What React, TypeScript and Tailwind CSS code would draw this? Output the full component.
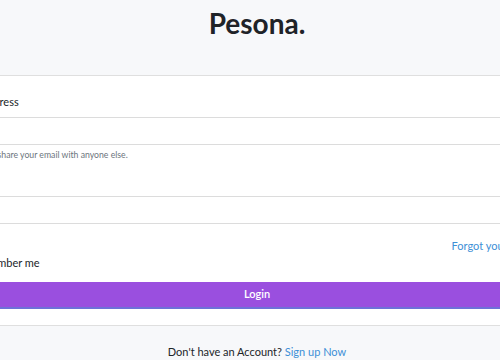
import React from "react";

export default function App() {
  return (
    <div
      className="w-[500px] h-[360px] overflow-hidden bg-white flex justify-center items-start"
      style={{ fontFamily: "Lato, 'Noto Sans', sans-serif" }}
    >
      <div className="shrink-0 w-[650px] ml-[14px] flex flex-col border border-t-0 border-[#dfdfdf] rounded">
        <div className="shrink-0 h-[76px] bg-[#f7f8fa] border-b border-[#dfdfdf] flex justify-center pt-[6px]">
          <h1 className="text-[28px] leading-[34px] font-bold text-[#1f2328]">Pesona.</h1>
        </div>
        <div className="shrink-0 px-[20px] pt-[17px] pb-[16px] flex flex-col">
          <label className="text-[11px] leading-[17px] text-[#212529] mb-[7px]">Email address</label>
          <div className="h-[28px] border border-[#dcdcdc] bg-white" />
          <p className="mt-[3px] text-[8.7px] leading-[14px] text-[#6c757d]">
            We'll never share your email with anyone else.
          </p>
          <label className="mt-[10px] text-[11px] leading-[17px] text-[#212529] mb-[7px]">Password</label>
          <div className="h-[28px] border border-[#dcdcdc] bg-white" />
          <div className="mt-[13px] flex justify-end">
            <a className="text-[11px] leading-[17px] text-[#3d8fd6]">Forgot your password?</a>
          </div>
          <div className="flex items-center gap-[3px]">
            <span className="w-[14px] h-[14px] border border-[#adb5bd] rounded-[3px] bg-white" />
            <span className="text-[11px] leading-[17px] text-[#212529]">Remember me</span>
          </div>
          <button className="mt-[11px] h-[27px] bg-[#9a4fdf] border-b-2 border-[#6d72d8] text-white text-[11px] font-semibold flex items-center justify-center">
            Login
          </button>
        </div>
        <div className="shrink-0 h-[60px] bg-[#f7f8fa] border-t border-[#dfdfdf] pt-[17px] flex justify-center">
          <p className="text-[11px] leading-[17px] text-[#212529]">
            Don't have an Account? <a className="text-[#3d8fd6]">Sign up Now</a>
          </p>
        </div>
      </div>
    </div>
  );
}
